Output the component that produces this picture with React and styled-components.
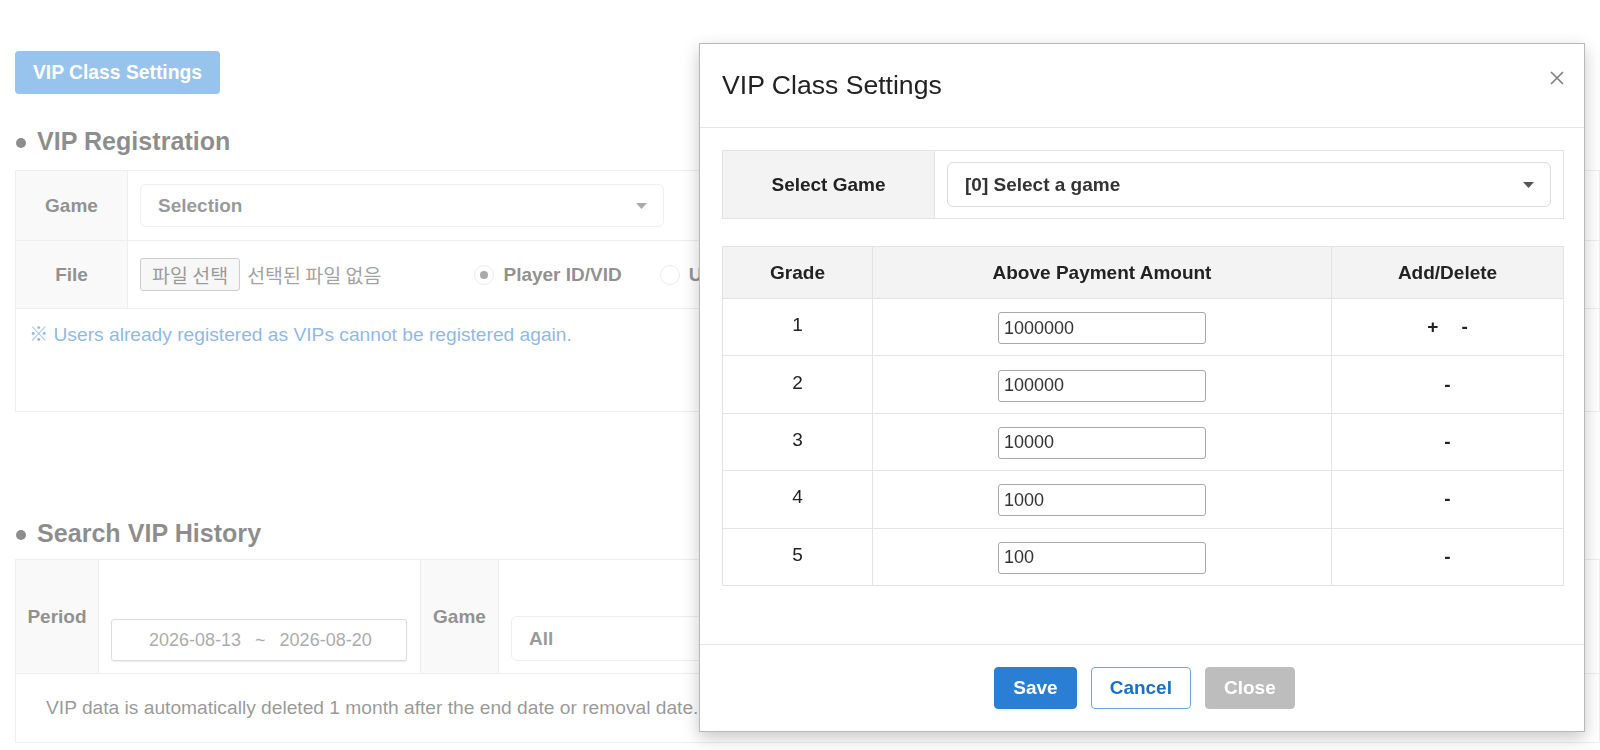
import React from 'react';
import styled, { createGlobalStyle } from 'styled-components';

const GlobalStyle = createGlobalStyle`
  * { box-sizing: border-box; }
  html, body { margin: 0; padding: 0; background: #fff; }
  body {
    font-family: "Liberation Sans", Arial, "Noto Sans CJK KR", sans-serif;
    color: #222;
    overflow: hidden;
  }
  button, input { font-family: inherit; }
`;

/* ---------- page behind the dialog ---------- */

const Page = styled.div`
  width: 1600px;
  height: 750px;
  padding: 51px 0 0 15px;
  overflow: hidden;
`;

const OpenButton = styled.button`
  height: 43px;
  padding: 0 18px;
  border: 0;
  border-radius: 4px;
  background: #2e86d8;
  color: #fff;
  font-size: 19.3px;
  font-weight: bold;
  cursor: pointer;
`;

const SectionTitle = styled.h2`
  display: flex;
  align-items: center;
  gap: 11px;
  margin: ${p => p.$top}px 0 ${p => p.$bottom}px;
  font-size: 25.1px;
  line-height: 30px;
  font-weight: bold;
  color: #1a1a1a;

  &::before {
    content: "";
    width: 10px;
    height: 10px;
    margin: 3px 0 0 1px;
    border-radius: 50%;
    background: currentColor;
  }
`;

const FormBox = styled.div`
  border: 1px solid #dcdcdc;
`;

const FormRow = styled.div`
  display: grid;
  grid-template-columns: ${p => p.$cols};
  height: ${p => p.$h}px;
  border-bottom: 1px solid #dcdcdc;
`;

const FormLabel = styled.div`
  display: flex;
  align-items: center;
  justify-content: center;
  background: #f2f2f2;
  border-right: 1px solid #dcdcdc;
  border-left: ${p => (p.$divider ? '1px solid #dcdcdc' : '0')};
  font-size: 19px;
  font-weight: bold;
  color: #222;
`;

const FormValue = styled.div`
  display: flex;
  align-items: ${p => (p.$bottom ? 'flex-end' : 'center')};
  padding: 0 12px ${p => (p.$bottom ? 12 : 0)}px;
  min-width: 0;
`;

const SelectBox = styled.div`
  display: flex;
  align-items: center;
  justify-content: space-between;
  flex: ${p => (p.$w ? `0 0 ${p.$w}px` : '1')};
  height: ${p => p.$h || 43}px;
  padding: 0 16px 0 17px;
  border: 1px solid #dcdcdc;
  border-radius: 6px;
  background: #fff;
  font-size: 19px;
  font-weight: bold;
  color: #333;
`;

const Caret = () => (
  <svg width="11" height="6" viewBox="0 0 11 6" aria-hidden="true">
    <path d="M0 0 H11 L5.5 6 Z" fill="#555" />
  </svg>
);

const FileButton = styled.button`
  height: 33px;
  padding: 0 11px;
  border: 1px solid #9a9a9a;
  border-radius: 3px;
  background: #efefef;
  font-family: "Noto Sans CJK KR", sans-serif;
  font-size: 19.5px;
  line-height: 1;
  color: #333;
`;

const FileName = styled.span`
  margin-left: 7px;
  font-family: "Noto Sans CJK KR", sans-serif;
  font-size: 19.5px;
  color: #444;
`;

const RadioOption = styled.label`
  display: flex;
  align-items: center;
  gap: 9px;
  margin-left: ${p => p.$gap}px;
  font-size: 19px;
  font-weight: bold;
  color: #222;
  white-space: nowrap;
`;

const RadioDot = styled.span`
  position: relative;
  width: 20px;
  height: 20px;
  border: 1px solid #d6d6d6;
  border-radius: 50%;
  background: #fff;

  &::after {
    content: "";
    display: ${p => (p.$checked ? 'block' : 'none')};
    position: absolute;
    left: 5px;
    top: 5px;
    width: 8px;
    height: 8px;
    border-radius: 50%;
    background: #555;
  }
`;

const Notice = styled.div`
  height: ${p => p.$h}px;
  display: flex;
  align-items: ${p => (p.$middle ? 'center' : 'flex-start')};
  padding: ${p => (p.$middle ? '0 0 0 30px' : '10px 0 0 13px')};
  font-size: 19.2px;
  color: ${p => (p.$accent ? '#1a72cf' : '#333')};
`;

const DateRange = styled.div`
  width: 296px;
  height: 42px;
  display: flex;
  align-items: center;
  gap: 14px;
  padding-left: 37px;
  border: 1px solid #b8b8b8;
  border-radius: 3px;
  box-shadow: 0 1px 1px rgba(0, 0, 0, 0.15);
  font-size: 18px;
  color: #555;
  white-space: nowrap;
`;

const Backdrop = styled.div`
  position: fixed;
  inset: 0;
  background: rgba(255, 255, 255, 0.5);
  z-index: 10;
`;

/* ---------- dialog ---------- */

const Dialog = styled.div`
  position: fixed;
  left: 699px;
  top: 43px;
  width: 886px;
  background: #fff;
  border: 1px solid rgba(0, 0, 0, 0.28);
  box-shadow: 0 6px 16px rgba(0, 0, 0, 0.22);
  z-index: 20;
`;

const DialogHeader = styled.div`
  height: 84px;
  display: flex;
  align-items: center;
  justify-content: space-between;
  padding: 0 20px 0 22px;
  border-bottom: 1px solid #e5e5e5;
`;

const DialogTitle = styled.h3`
  margin: 0;
  font-size: 26.6px;
  font-weight: normal;
  color: #222;
`;

const CloseIcon = styled.button`
  display: flex;
  margin: 0 0 16px;
  padding: 0;
  border: 0;
  background: none;
  cursor: pointer;
`;

const DialogBody = styled.div`
  padding: 22px 20px 58px 22px;
`;

const Grid = styled.table`
  width: 100%;
  border-collapse: collapse;
  table-layout: fixed;
  margin-top: ${p => p.$top || 0}px;
`;

const HeadCell = styled.th`
  width: ${p => (p.$w ? `${p.$w}px` : 'auto')};
  height: ${p => p.$h}px;
  padding: 0;
  border: 1px solid #e3e3e3;
  background: #f3f3f3;
  font-size: 19px;
  font-weight: bold;
  color: #222;
  text-align: center;
`;

const Cell = styled.td`
  height: ${p => p.$h}px;
  padding: ${p => p.$pad || '0'};
  border: 1px solid #e3e3e3;
  font-size: 19px;
  color: #222;
  text-align: center;
  vertical-align: middle;
`;

const GradeNo = styled.span`
  display: inline-block;
  transform: translateY(-2px);
`;

const AmountInput = styled.input`
  width: 208px;
  height: 32px;
  margin-top: 2px;
  padding: 0 5px;
  border: 1px solid #a8a8a8;
  border-radius: 3px;
  font-size: 18px;
  color: #333;
  vertical-align: middle;
`;

const RowActions = styled.div`
  display: flex;
  justify-content: center;
  gap: 23px;
  font-size: 19px;
  font-weight: bold;
  color: #222;
`;

const DialogFooter = styled.div`
  display: flex;
  justify-content: center;
  gap: 14px;
  padding: 22px 20px 22px 25px;
  border-top: 1px solid #e5e5e5;
`;

const variants = {
  primary: { bg: '#2a7fd4', border: '#2a7fd4', color: '#fff' },
  outline: { bg: '#fff', border: '#6aa9e6', color: '#1b6fc6' },
  muted: { bg: '#bdbdbd', border: '#bdbdbd', color: '#fff' },
};

const ActionButton = styled.button`
  height: 42px;
  padding: 0 18px;
  border: 1px solid ${p => variants[p.$variant].border};
  border-radius: 4px;
  background: ${p => variants[p.$variant].bg};
  color: ${p => variants[p.$variant].color};
  font-size: 19px;
  font-weight: bold;
  cursor: pointer;
`;

const grades = [
  { no: 1, amount: '1000000', add: true },
  { no: 2, amount: '100000' },
  { no: 3, amount: '10000' },
  { no: 4, amount: '1000' },
  { no: 5, amount: '100' },
];

export default function App() {
  return (
    <>
      <GlobalStyle />
      <Page>
        <OpenButton>VIP Class Settings</OpenButton>

        <SectionTitle $top={32} $bottom={14}>VIP Registration</SectionTitle>
        <FormBox>
          <FormRow $cols="112px 1fr" $h={70}>
            <FormLabel>Game</FormLabel>
            <FormValue>
              <SelectBox $w={524}>
                <span>Selection</span>
                <Caret />
              </SelectBox>
            </FormValue>
          </FormRow>
          <FormRow $cols="112px 1fr" $h={68}>
            <FormLabel>File</FormLabel>
            <FormValue>
              <FileButton>파일 선택</FileButton>
              <FileName>선택된 파일 없음</FileName>
              <RadioOption $gap={93}>
                <RadioDot $checked />
                Player ID/VID
              </RadioOption>
              <RadioOption $gap={38}>
                <RadioDot />
                User ID
              </RadioOption>
            </FormValue>
          </FormRow>
          <Notice $h={102} $accent>
            ※ Users already registered as VIPs cannot be registered again.
          </Notice>
        </FormBox>

        <SectionTitle $top={106} $bottom={11}>Search VIP History</SectionTitle>
        <FormBox>
          <FormRow $cols="83px 321px 79px 1fr" $h={114}>
            <FormLabel>Period</FormLabel>
            <FormValue $bottom>
              <DateRange>
                <span>2026-08-13</span>
                <span>~</span>
                <span>2026-08-20</span>
              </DateRange>
            </FormValue>
            <FormLabel $divider>Game</FormLabel>
            <FormValue $bottom>
              <SelectBox $w={520} $h={45}>
                <span>All</span>
                <Caret />
              </SelectBox>
            </FormValue>
          </FormRow>
          <Notice $h={68} $middle>
            VIP data is automatically deleted 1 month after the end date or removal date.
          </Notice>
        </FormBox>
      </Page>

      <Backdrop />

      <Dialog role="dialog" aria-label="VIP Class Settings">
        <DialogHeader>
          <DialogTitle>VIP Class Settings</DialogTitle>
          <CloseIcon aria-label="Close">
            <svg width="14" height="14" viewBox="0 0 14 14">
              <path d="M1 1 L13 13 M13 1 L1 13" stroke="#808080" strokeWidth="1.7" />
            </svg>
          </CloseIcon>
        </DialogHeader>

        <DialogBody>
          <Grid>
            <tbody>
              <tr>
                <HeadCell as="th" $w={212} $h={68}>Select Game</HeadCell>
                <Cell $pad="11px 12px">
                  <SelectBox $h={45}>
                    <span>[0] Select a game</span>
                    <Caret />
                  </SelectBox>
                </Cell>
              </tr>
            </tbody>
          </Grid>

          <Grid $top={27}>
            <thead>
              <tr>
                <HeadCell $w={150} $h={52}>Grade</HeadCell>
                <HeadCell $w={459} $h={52}>Above Payment Amount</HeadCell>
                <HeadCell $h={52}>Add/Delete</HeadCell>
              </tr>
            </thead>
            <tbody>
              {grades.map(g => (
                <tr key={g.no}>
                  <Cell $h={57.4}>
                    <GradeNo>{g.no}</GradeNo>
                  </Cell>
                  <Cell $h={57.4}>
                    <AmountInput defaultValue={g.amount} />
                  </Cell>
                  <Cell $h={57.4}>
                    <RowActions>
                      {g.add && <span>+</span>}
                      <span>-</span>
                    </RowActions>
                  </Cell>
                </tr>
              ))}
            </tbody>
          </Grid>
        </DialogBody>

        <DialogFooter>
          <ActionButton $variant="primary">Save</ActionButton>
          <ActionButton $variant="outline">Cancel</ActionButton>
          <ActionButton $variant="muted">Close</ActionButton>
        </DialogFooter>
      </Dialog>
    </>
  );
}
